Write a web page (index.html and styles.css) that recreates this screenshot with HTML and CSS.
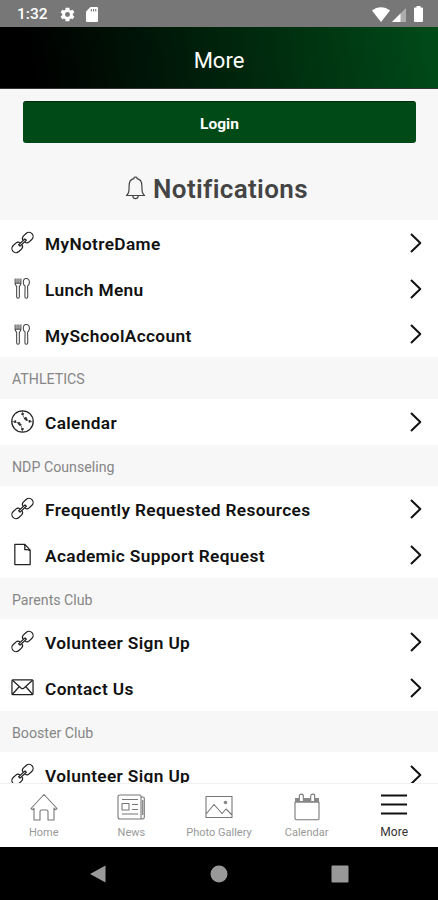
FILE: index.html
```html
<!DOCTYPE html>
<html lang="en">
<head>
    <meta charset="UTF-8">
    <meta name="viewport" content="width=device-width, initial-scale=1.0">
    <title>More</title>
    <link rel="stylesheet" href="styles.css">
</head>
<body>
    <!-- Shared icons -->
    <svg class="icon-defs" width="0" height="0">
        <symbol id="icon-link" viewBox="0 0 24 24">
            <g transform="rotate(-43 12 12)">
                <path d="M9.800 10.500C9.600 8.800 8.200 7.700 6.500 7.700H2.800a4.300 4.300 0 0 0 0 8.600h3.700c1.700 0 3.100-1.100 3.300-2.800M14.200 10.500c.2-1.700 1.600-2.800 3.300-2.800h3.700a4.300 4.300 0 0 1 0 8.600h-3.700c-1.700 0-3.100-1.100-3.300-2.800"/>
                <path d="M7.500 11h9v2h-9z"/>
            </g>
        </symbol>
        <symbol id="icon-utensils" viewBox="0 0 24 24">
            <path d="M4.300 1.500v5.200c0 1.600 1 2.200 1.600 2.800v11.200c0 2 2.800 2 2.800 0V9.500c.6-.6 1.600-1.200 1.600-2.800V1.500M6.300 1.500v5M8.300 1.500v5M4.300 6.500h6"/>
            <path d="M16 1.500c-2 0-3.200 1.900-3.200 4 0 2 .8 3.200 1.900 4.100l-.2 11c0 2.200 3 2.200 3 0l-.2-11c1.100-.9 1.900-2.100 1.900-4.100 0-2.100-1.200-4-3.200-4z"/>
        </symbol>
        <symbol id="icon-ball" viewBox="0 0 24 24">
            <circle cx="12" cy="12" r="11.200"/>
            <path d="M11.800 1.200c.2 4.300 1.400 7 3.400 8.600 2 1.600 4.500 2.300 7.500 2.400M1.200 12c3.300.1 5.800.8 7.600 2.400 2 1.700 3 4.400 3.200 8.200" stroke-width=".7"/>
            <path d="M10.800 4.500l2.600-.6M13.800 9.600l2.400-1.900M15.400 11l1.500-1.800M19.300 13.200l.5-2.700M4 13.400l.6-2.600M7.300 14.800L9 12.700M8.600 16l2-1.600M10.700 20.200l2.600-.6" stroke-width="1.700"/>
        </symbol>
        <symbol id="icon-file" viewBox="0 0 24 24">
            <path d="M4 1.500h10.500l5.500 6v15H4zM14 1.500c.5 1 .6 3.500.3 5.500 2-.3 4.500 0 5.700 1"/>
        </symbol>
        <symbol id="icon-mail" viewBox="0 0 24 24">
            <rect x="1" y="4" width="22" height="15.500" rx="1"/>
            <path d="M1.500 4.500l9.200 8.200c.8.700 1.800.7 2.600 0l9.200-8.200M1.500 19l7.200-8M22.500 19l-7.200-8"/>
        </symbol>
        <symbol id="icon-chevron" viewBox="0 0 12 20">
            <path d="M1 1l9.300 9L1 19"/>
        </symbol>
    </svg>

    <div class="status-bar">
        <span class="time">1:32</span>
        <svg class="gear" viewBox="0 0 24 24"><path fill-rule="evenodd" d="M19.400 13a7.500 7.500 0 0 0 0-2l2.300-1.700-2.200-3.900-2.700 1.100a8 8 0 0 0-1.700-1L14.700 2.500H9.300l-.4 3a8 8 0 0 0-1.700 1L4.500 5.400 2.300 9.300 4.600 11a7.500 7.500 0 0 0 0 2l-2.300 1.700 2.200 3.900 2.700-1.100a8 8 0 0 0 1.700 1l.4 3h5.400l.4-3a8 8 0 0 0 1.700-1l2.700 1.100 2.200-3.900zM12 15.500a3.500 3.500 0 1 1 0-7 3.500 3.500 0 0 1 0 7z"/></svg>
        <svg class="sd-card" viewBox="0 0 12 15"><path fill-rule="evenodd" d="M4.500 0H11a1 1 0 0 1 1 1v13a1 1 0 0 1-1 1H1a1 1 0 0 1-1-1V4.500zM4.800 2v2.500h1.100V2zM7 2v2.500h1.100V2zM9.200 2v2.500h1.100V2z"/></svg>
        <div class="signals">
            <svg class="wifi" viewBox="0 0 18 15"><path d="M9 15L0 3.500C5-1 13-1 18 3.500z"/></svg>
            <svg class="cell" viewBox="0 0 14 14"><path d="M14 0v14H0z" opacity=".4"/><path d="M8.500 5.500V14H0z"/></svg>
            <svg class="battery" viewBox="0 0 9 16"><path d="M2.500 0h4v1.500H8a1 1 0 0 1 1 1V15a1 1 0 0 1-1 1H1a1 1 0 0 1-1-1V2.500a1 1 0 0 1 1-1h1.500z"/></svg>
        </div>
    </div>

    <header>
        <h1>More</h1>
    </header>

    <main>
        <div class="top">
            <button class="login-btn">Login</button>
            <h2 class="notifications">
                <svg viewBox="0 0 20 24"><path d="M1 19.500c2.200-2 2.600-3.500 2.600-9.500 0-4 1.800-7 4.900-7.400V1.800c0-1 3-1 3 0v.8c3.100.4 4.900 3.400 4.900 7.400 0 6 .4 7.500 2.600 9.500zM7.200 19.700c.4 4 5.200 4 5.600 0"/></svg>
                Notifications
            </h2>
        </div>

        <ul class="menu">
            <li class="item"><svg class="icon"><use href="#icon-link"/></svg><span>MyNotreDame</span><svg class="chevron"><use href="#icon-chevron"/></svg></li>
            <li class="item"><svg class="icon thin"><use href="#icon-utensils"/></svg><span>Lunch Menu</span><svg class="chevron"><use href="#icon-chevron"/></svg></li>
            <li class="item"><svg class="icon thin"><use href="#icon-utensils"/></svg><span>MySchoolAccount</span><svg class="chevron"><use href="#icon-chevron"/></svg></li>
            <li class="section">ATHLETICS</li>
            <li class="item"><svg class="icon"><use href="#icon-ball"/></svg><span>Calendar</span><svg class="chevron"><use href="#icon-chevron"/></svg></li>
            <li class="section">NDP Counseling</li>
            <li class="item"><svg class="icon"><use href="#icon-link"/></svg><span>Frequently Requested Resources</span><svg class="chevron"><use href="#icon-chevron"/></svg></li>
            <li class="item"><svg class="icon"><use href="#icon-file"/></svg><span>Academic Support Request</span><svg class="chevron"><use href="#icon-chevron"/></svg></li>
            <li class="section">Parents Club</li>
            <li class="item"><svg class="icon"><use href="#icon-link"/></svg><span>Volunteer Sign Up</span><svg class="chevron"><use href="#icon-chevron"/></svg></li>
            <li class="item"><svg class="icon"><use href="#icon-mail"/></svg><span>Contact Us</span><svg class="chevron"><use href="#icon-chevron"/></svg></li>
            <li class="section">Booster Club</li>
            <li class="item"><svg class="icon"><use href="#icon-link"/></svg><span>Volunteer Sign Up</span><svg class="chevron"><use href="#icon-chevron"/></svg></li>
        </ul>
    </main>

    <nav class="tabs">
        <a class="tab">
            <svg viewBox="0 0 28 28"><path d="M1 15.500L14 1.500l13 14-1.500 1.200-1.500-1.500V27h-6v-8.500c0-1-.5-1.500-1.500-1.500h-5c-1 0-1.500.5-1.500 1.500V27H4V15.200l-1.500 1.500z"/></svg>
            <span>Home</span>
        </a>
        <a class="tab">
            <svg viewBox="0 0 28 28"><path d="M3 2h19.500c1 0 1.500.5 1.500 1.500v21c0 1 .7 1.500 1.500 1.500H3c-1 0-2-1-2-2V3.500C1 2.500 2 2 3 2zM24 4h2c.7 0 1.300.6 1.300 1.300v19c0 1-.7 1.700-1.700 1.700M25.700 7v15M5 10.500h7v6.500H5zM5 6.500h16M15 11.500h6M15 16.500h6M5 21h16"/></svg>
            <span>News</span>
        </a>
        <a class="tab">
            <svg viewBox="0 0 28 28"><path d="M1 3.500h26V24.500H1zM1.500 20.500l7.500-9 8 9 4-4.500 5.500 5.500"/><circle cx="20.500" cy="9.500" r="1.800" class="fill"/></svg>
            <span>Photo Gallery</span>
        </a>
        <a class="tab">
            <svg viewBox="0 0 28 28"><path d="M2 9v16.500c0 .8.500 1.200 1.200 1.200h21.600c.7 0 1.200-.4 1.200-1.200V9z"/><path class="fill" d="M2 5h4v3h5V5h6v3h5V5h4v4.500H2z"/><path class="ring" d="M6.300 8V3c0-2.500 4-2.500 4 0v5M17.700 8V3c0-2.500 4-2.500 4 0v5"/></svg>
            <span>Calendar</span>
        </a>
        <a class="tab active">
            <svg viewBox="0 0 28 28"><path d="M1 2.500h26M1 11.500h26M1 20.500h26"/></svg>
            <span>More</span>
        </a>
    </nav>

    <div class="system-nav">
        <svg viewBox="0 0 18 18"><path d="M1 9L16.500.500v17z"/></svg>
        <svg viewBox="0 0 18 18"><circle cx="9" cy="9" r="8.500"/></svg>
        <svg viewBox="0 0 18 18"><rect x=".5" y=".5" width="17" height="17" rx="1"/></svg>
    </div>
</body>
</html>
```

FILE: styles.css
```css
/* Base styles */
* {
    margin: 0;
    padding: 0;
    box-sizing: border-box;
}

:root {
    --green: #004a18;
    --light: #f7f7f7;
    --gray: #868686;
}

body {
    font-family: Roboto, sans-serif;
    color: #111;
    background: var(--light);
    height: 900px;
    display: flex;
    flex-direction: column;
    overflow: hidden;
}

svg {
    flex: none;
    fill: none;
    stroke-linejoin: round;
}

.icon-defs {
    display: none;
}

/* Status bar */
.status-bar {
    height: 27px;
    flex: none;
    display: flex;
    align-items: center;
    padding: 1px 15px 0 17px;
    background: #777;
    color: #fff;
}

.status-bar svg {
    fill: #fff;
}

.time {
    width: 42px;
    font-size: 15.5px;
    font-weight: 500;
    line-height: 27px;
}

.gear {
    width: 17px;
    height: 17px;
}

.sd-card {
    width: 12px;
    height: 15px;
    margin-left: 10px;
}

.signals {
    display: flex;
    align-items: center;
    margin-left: auto;
}

.wifi {
    width: 18px;
    height: 15px;
}

.cell {
    width: 14px;
    height: 14px;
    margin: 1px 8px 0 2px;
}

.battery {
    width: 9px;
    height: 16px;
}

/* Header */
header {
    height: 62px;
    flex: none;
    padding-top: 3px;
    background: linear-gradient(80deg, #000 8%, var(--green) 98%);
    border-bottom: 1px solid #333;
}

h1 {
    font-size: 22px;
    font-weight: 400;
    line-height: 62px;
    text-align: center;
    color: #fff;
}

/* Content */
main {
    flex: 1;
    min-height: 0;
    overflow: hidden;
}

.top {
    height: 131px;
    padding: 12px 22px 0 23px;
}

.login-btn {
    display: block;
    width: 100%;
    height: 42px;
    padding-top: 2px;
    border: none;
    border-top: 1px solid #002a0a;
    border-radius: 3px;
    background: var(--green);
    color: #fff;
    font: 700 15.5px Roboto, sans-serif;
}

.notifications {
    display: flex;
    align-items: center;
    justify-content: center;
    gap: 7px;
    margin-top: 29px;
    padding-right: 6px;
    font-size: 26px;
    font-weight: 600;
    line-height: 34px;
    letter-spacing: 0.35px;
    color: #444;
}

.notifications svg {
    width: 21px;
    height: 24px;
    margin-top: -3px;
    stroke: #444;
    stroke-width: 1.2;
}

.menu {
    list-style: none;
}

.item {
    height: 45.8px;
    display: flex;
    align-items: center;
    padding: 0 16px 0 11px;
    background: #fff;
}

.item span {
    flex: 1;
    padding: 3px 0 0 11px;
    font-size: 17.3px;
    font-weight: 600;
    letter-spacing: 0.35px;
    white-space: nowrap;
}

.icon {
    width: 23px;
    height: 23px;
    stroke: #222;
    stroke-width: 1.3;
}

.icon.thin {
    stroke: #444;
    stroke-width: 1.1;
}

.chevron {
    width: 12px;
    height: 20px;
    stroke: #111;
    stroke-width: 2;
}

.section {
    height: 41.4px;
    padding-left: 12px;
    font-size: 14.2px;
    line-height: 44px;
    color: var(--gray);
}

/* Bottom tabs */
.tabs {
    height: 64px;
    flex: none;
    display: grid;
    grid-template-columns: repeat(5, 1fr);
    padding-top: 9px;
    border-top: 1px solid #f0f0f0;
    background: #fff;
}

.tab {
    display: flex;
    flex-direction: column;
    align-items: center;
    font-size: 11px;
    line-height: 14px;
    white-space: nowrap;
    color: #999;
}

.tab svg {
    width: 28px;
    height: 28px;
    margin-bottom: 5px;
    stroke: #777;
    stroke-width: 1.1;
}

.tab .fill {
    fill: #888;
    stroke: none;
}

.tab .ring {
    fill: #fff;
}

.tab.active {
    color: #333;
    font-size: 12px;
}

.tab.active svg {
    margin-bottom: 4px;
    stroke: #111;
    stroke-width: 2;
}

/* Android navigation */
.system-nav {
    height: 53px;
    flex: none;
    display: flex;
    justify-content: space-between;
    padding: 18px 89px 0 89px;
    background: #000;
}

.system-nav svg {
    width: 18px;
    height: 18px;
    fill: #999;
}
```
